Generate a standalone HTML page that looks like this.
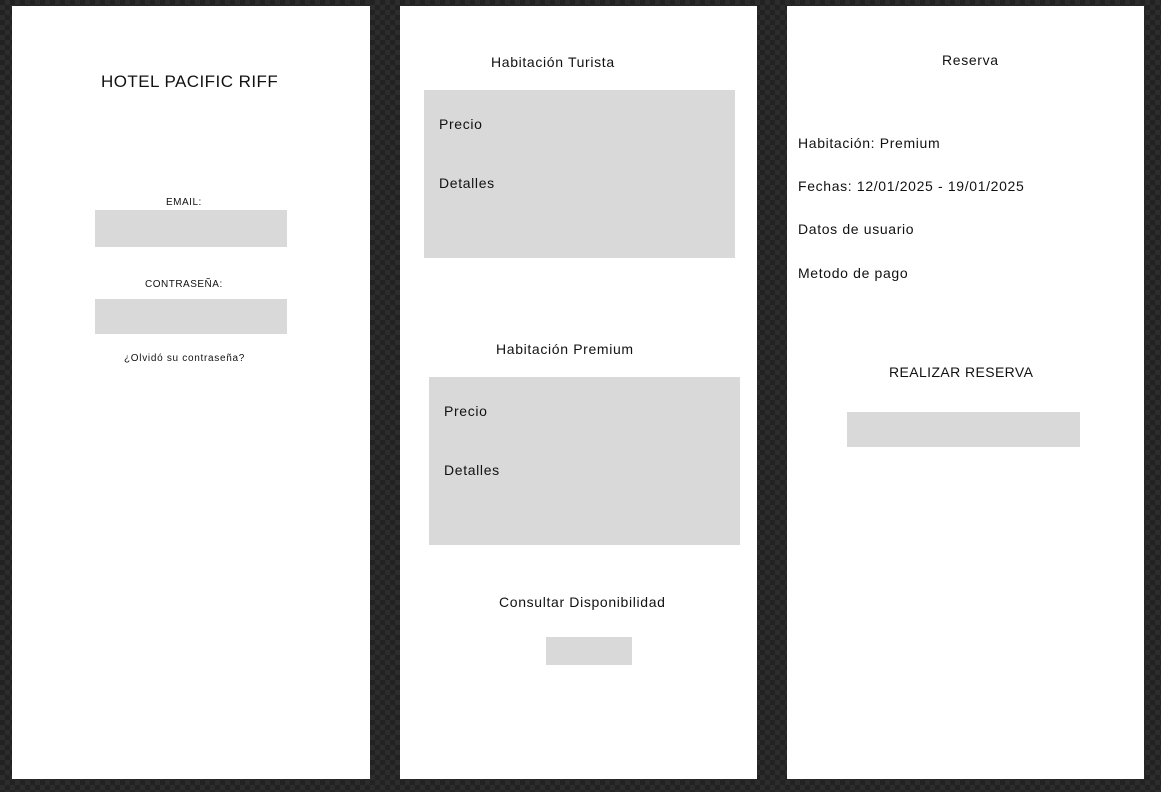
<!DOCTYPE html>
<html><head><meta charset="utf-8"><style>
html,body{margin:0;padding:0}
body{width:1161px;height:792px;position:relative;overflow:hidden;
background-color:#222;
background-image:conic-gradient(#2c2c2c 25%,#222 0 50%,#2c2c2c 0 75%,#222 0);
background-size:10px 10px;
font-family:"Liberation Sans",sans-serif;color:#111}
.p{position:absolute;top:6px;height:773px;background:#fff}
.t{position:absolute;white-space:nowrap;line-height:1;letter-spacing:0.65px}
.b{position:absolute;background:#d9d9d9}
</style></head><body>
<div class="p" style="left:12px;width:358px"></div>
<div class="p" style="left:400px;width:357px"></div>
<div class="p" style="left:787px;width:357px"></div>

<div class="t" style="left:101px;top:73px;font-size:17px;letter-spacing:0.45px">HOTEL PACIFIC RIFF</div>
<div class="t" style="left:166px;top:198px;font-size:10px;letter-spacing:0.5px">EMAIL:</div>
<div class="b" style="left:95px;top:210px;width:192px;height:37px"></div>
<div class="t" style="left:145px;top:280px;font-size:10px;letter-spacing:0.5px">CONTRASEÑA:</div>
<div class="b" style="left:95px;top:299px;width:192px;height:35px"></div>
<div class="t" style="left:124px;top:354px;font-size:10px;letter-spacing:0.7px">¿Olvidó su contraseña?</div>

<div class="t" style="left:491px;top:55px;font-size:14px">Habitación Turista</div>
<div class="b" style="left:424px;top:90px;width:311px;height:168px"></div>
<div class="t" style="left:439px;top:117px;font-size:14px">Precio</div>
<div class="t" style="left:439px;top:176px;font-size:14px">Detalles</div>
<div class="t" style="left:496px;top:342px;font-size:14px">Habitación Premium</div>
<div class="b" style="left:429px;top:377px;width:311px;height:168px"></div>
<div class="t" style="left:444px;top:404px;font-size:14px">Precio</div>
<div class="t" style="left:444px;top:463px;font-size:14px">Detalles</div>
<div class="t" style="left:499px;top:595px;font-size:14px">Consultar Disponibilidad</div>
<div class="b" style="left:546px;top:637px;width:86px;height:28px"></div>

<div class="t" style="left:942px;top:53px;font-size:14px">Reserva</div>
<div class="t" style="left:798px;top:136px;font-size:14px">Habitación: Premium</div>
<div class="t" style="left:798px;top:179px;font-size:14px">Fechas: 12/01/2025 - 19/01/2025</div>
<div class="t" style="left:798px;top:222px;font-size:14px">Datos de usuario</div>
<div class="t" style="left:798px;top:266px;font-size:14px">Metodo de pago</div>
<div class="t" style="left:889px;top:365px;font-size:14px;letter-spacing:0.4px">REALIZAR RESERVA</div>
<div class="b" style="left:847px;top:412px;width:233px;height:35px"></div>
</body></html>
